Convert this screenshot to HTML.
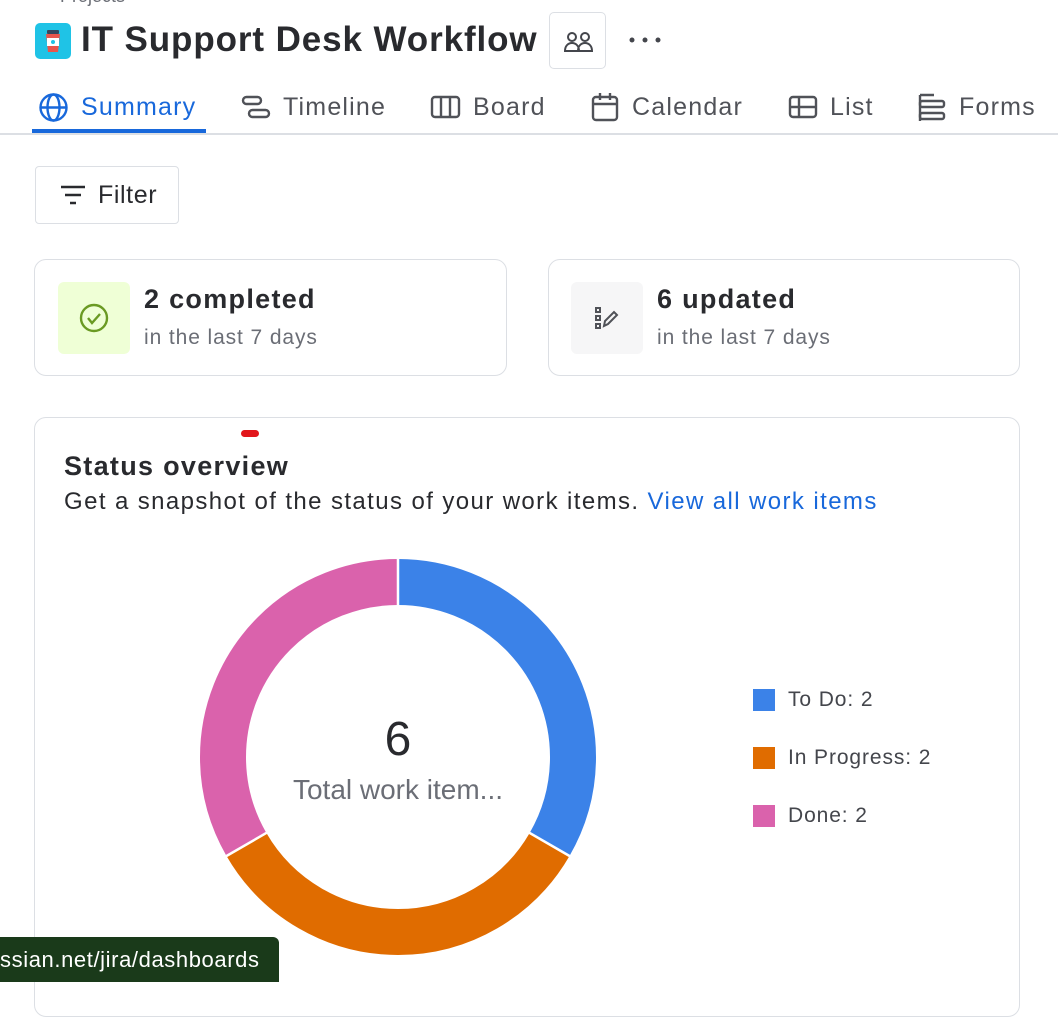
<!DOCTYPE html>
<html><head><meta charset="utf-8"><style>
*{margin:0;padding:0;box-sizing:border-box}
body{width:1058px;height:982px;overflow:hidden;background:#fff;font-family:"Liberation Sans",sans-serif;color:#292a2e;position:relative}
.abs{position:absolute}
.tab{position:absolute;top:90px;font-size:25px;letter-spacing:1.2px;color:#505258;display:flex;align-items:center;gap:12px;height:34px}
.card{position:absolute;border:1px solid #dcdfe4;border-radius:12px;background:#fff}
</style></head><body>
<div class="abs" style="left:60px;top:-14px;font-size:18px;color:#6b6e76">Projects</div>
<div class="abs" style="left:35px;top:23px;width:36px;height:36px;border-radius:5px;background:#1fc3e6">
<svg width="36" height="36" viewBox="0 0 36 36"><rect x="12" y="7" width="12" height="4" rx="1" fill="#35475e"/><path d="M11 11h14l-2 18h-10z" fill="#e9554c"/><rect x="12" y="15" width="12" height="8" fill="#fff"/><circle cx="18" cy="19" r="2" fill="#1fc3e6"/></svg></div>
<div class="abs" style="left:81px;top:20px;font-size:35px;font-weight:bold;letter-spacing:0.9px;color:#292a2e">IT Support Desk Workflow</div>
<div class="abs" style="left:549px;top:12px;width:57px;height:57px;border:1px solid #dcdfe4;border-radius:5px">
<svg width="57" height="57" viewBox="0 0 57 57" fill="none" stroke="#44464c" stroke-width="2"><circle cx="22" cy="24" r="4"/><circle cx="35" cy="24" r="4"/><path d="M15 38c0-5 3-8 7-8s7 3 7 8zM28 38c0-5 3-8 7-8s7 3 7 8z"/></svg></div>
<svg class="abs" style="left:628px;top:34px" width="36" height="12"><circle cx="4" cy="6" r="2.5" fill="#44464c"/><circle cx="17" cy="6" r="2.5" fill="#44464c"/><circle cx="30" cy="6" r="2.5" fill="#44464c"/></svg>
<div class="tab" style="left:38px;color:#1868db"><svg width="31" height="31" viewBox="0 0 31 31" fill="none" stroke="#1868db" stroke-width="2.4"><circle cx="15.5" cy="15.5" r="13"/><ellipse cx="15.5" cy="15.5" rx="6" ry="13"/><path d="M3 15.5h25"/></svg>Summary</div>
<div class="abs" style="left:32px;top:129px;width:174px;height:5px;background:#1868db"></div>
<div class="abs" style="left:0;top:133px;width:1058px;height:2px;background:#dcdfe4"></div>
<div class="tab" style="left:241px"><svg width="30" height="30" viewBox="0 0 30 30" fill="none" stroke="#505258" stroke-width="2.4"><rect x="2" y="5" width="18" height="7" rx="3.5"/><rect x="8" y="18" width="20" height="7" rx="3.5"/></svg>Timeline</div>
<div class="tab" style="left:430px"><svg width="31" height="30" viewBox="0 0 31 30" fill="none" stroke="#505258" stroke-width="2.4"><rect x="2" y="5" width="27" height="20" rx="3"/><path d="M11 5v20M20 5v20"/></svg>Board</div>
<div class="tab" style="left:590px"><svg width="30" height="32" viewBox="0 0 30 32" fill="none" stroke="#505258" stroke-width="2.4"><rect x="3" y="6" width="24" height="23" rx="3"/><path d="M3 13h24M10 2v7M20 2v7"/></svg>Calendar</div>
<div class="tab" style="left:788px"><svg width="30" height="30" viewBox="0 0 30 30" fill="none" stroke="#505258" stroke-width="2.4"><rect x="2" y="5" width="26" height="20" rx="3"/><path d="M2 15h26M11 5v20"/></svg>List</div>
<div class="tab" style="left:917px"><svg width="30" height="32" viewBox="0 0 30 32" fill="none" stroke="#505258" stroke-width="2.4"><path d="M3 4h14M3 4v26"/><rect x="3" y="10" width="24" height="6" rx="2"/><rect x="3" y="22" width="24" height="6" rx="2"/></svg>Forms</div>

<div class="abs" style="left:35px;top:166px;width:144px;height:58px;border:1px solid #dcdfe4;border-radius:4px;font-size:25px;letter-spacing:0.6px;display:flex;align-items:center;padding-left:24px;gap:12px">
<svg width="26" height="26" viewBox="0 0 26 26" stroke="#292a2e" stroke-width="2.4"><path d="M1 5h24M5 13h16M10 21h6"/></svg>Filter</div>

<div class="card" style="left:34px;top:259px;width:473px;height:117px">
<div class="abs" style="left:23px;top:22px;width:72px;height:72px;border-radius:6px;background:#efffd6"><svg width="72" height="72" viewBox="0 0 72 72" fill="none" stroke="#6a9a23" stroke-width="2.4"><circle cx="36" cy="36" r="13"/><path d="M30 36l4 5 8-9"/></svg></div>
<div class="abs" style="left:109px;top:24px;font-size:27px;font-weight:bold;letter-spacing:1.3px">2 completed</div>
<div class="abs" style="left:109px;top:66px;font-size:21px;letter-spacing:0.9px;color:#6b6e76">in the last 7 days</div></div>
<div class="card" style="left:548px;top:259px;width:472px;height:117px">
<div class="abs" style="left:22px;top:22px;width:72px;height:72px;border-radius:6px;background:#f6f6f7"><svg width="72" height="72" viewBox="0 0 72 72" fill="none" stroke="#505258" stroke-width="2"><rect x="25" y="26" width="4" height="4"/><rect x="25" y="34" width="4" height="4"/><rect x="25" y="42" width="4" height="4"/><path d="M33 44l1-5 9-9 3 3-9 9z"/></svg></div>
<div class="abs" style="left:108px;top:24px;font-size:27px;font-weight:bold;letter-spacing:1.3px">6 updated</div>
<div class="abs" style="left:108px;top:66px;font-size:21px;letter-spacing:0.9px;color:#6b6e76">in the last 7 days</div></div>

<div class="card" style="left:34px;top:417px;width:986px;height:600px">
<div class="abs" style="left:206px;top:12px;width:18px;height:7px;border-radius:4px;background:#e2161b"></div>
<div class="abs" style="left:29px;top:33px;font-size:27px;font-weight:bold;letter-spacing:1.3px">Status overview</div>
<div class="abs" style="left:29px;top:70px;font-size:24px;letter-spacing:1.4px;white-space:nowrap">Get a snapshot of the status of your work items. <span style="color:#1868db">View all work items</span></div>
</div>
<svg class="abs" style="left:0;top:0" width="1058" height="982">
<g transform="rotate(-90 398 757)" fill="none" stroke-width="46">
<circle cx="398" cy="757" r="175" stroke="#3b82e8" stroke-dasharray="366.5 733.1"/>
<circle cx="398" cy="757" r="175" stroke="#e06c00" stroke-dasharray="0 366.5 366.5 366.6"/>
<circle cx="398" cy="757" r="175" stroke="#da62ac" stroke-dasharray="0 733 366.6 0"/>
</g>
<g stroke="#fff" stroke-width="2.5">
<line x1="398" y1="757" x2="398" y2="555"/>
<line x1="398" y1="757" x2="573" y2="858"/>
<line x1="398" y1="757" x2="223" y2="858"/>
</g>
<circle cx="398" cy="757" r="151" fill="#fff"/>
</svg>
<div class="abs" style="left:298px;top:712px;width:200px;text-align:center;font-size:48px;color:#292a2e">6</div>
<div class="abs" style="left:270px;top:774px;width:256px;text-align:center;font-size:28px;color:#6b6e76">Total work item...</div>
<div class="abs" style="left:753px;top:689px;width:22px;height:22px;background:#3b82e8"></div>
<div class="abs" style="left:788px;top:688px;font-size:21px;letter-spacing:0.9px;color:#44464c">To Do: 2</div>
<div class="abs" style="left:753px;top:747px;width:22px;height:22px;background:#e06c00"></div>
<div class="abs" style="left:788px;top:746px;font-size:21px;letter-spacing:0.9px;color:#44464c">In Progress: 2</div>
<div class="abs" style="left:753px;top:805px;width:22px;height:22px;background:#da62ac"></div>
<div class="abs" style="left:788px;top:804px;font-size:21px;letter-spacing:0.9px;color:#44464c">Done: 2</div>
<div class="abs" style="left:0;top:937px;width:279px;height:45px;background:#1a3a1a;border-radius:0 6px 0 0;color:#fff;font-size:22px;letter-spacing:0.6px;padding:10px 0 0 0;white-space:nowrap;overflow:hidden">ssian.net/jira/dashboards</div>
</body></html>
